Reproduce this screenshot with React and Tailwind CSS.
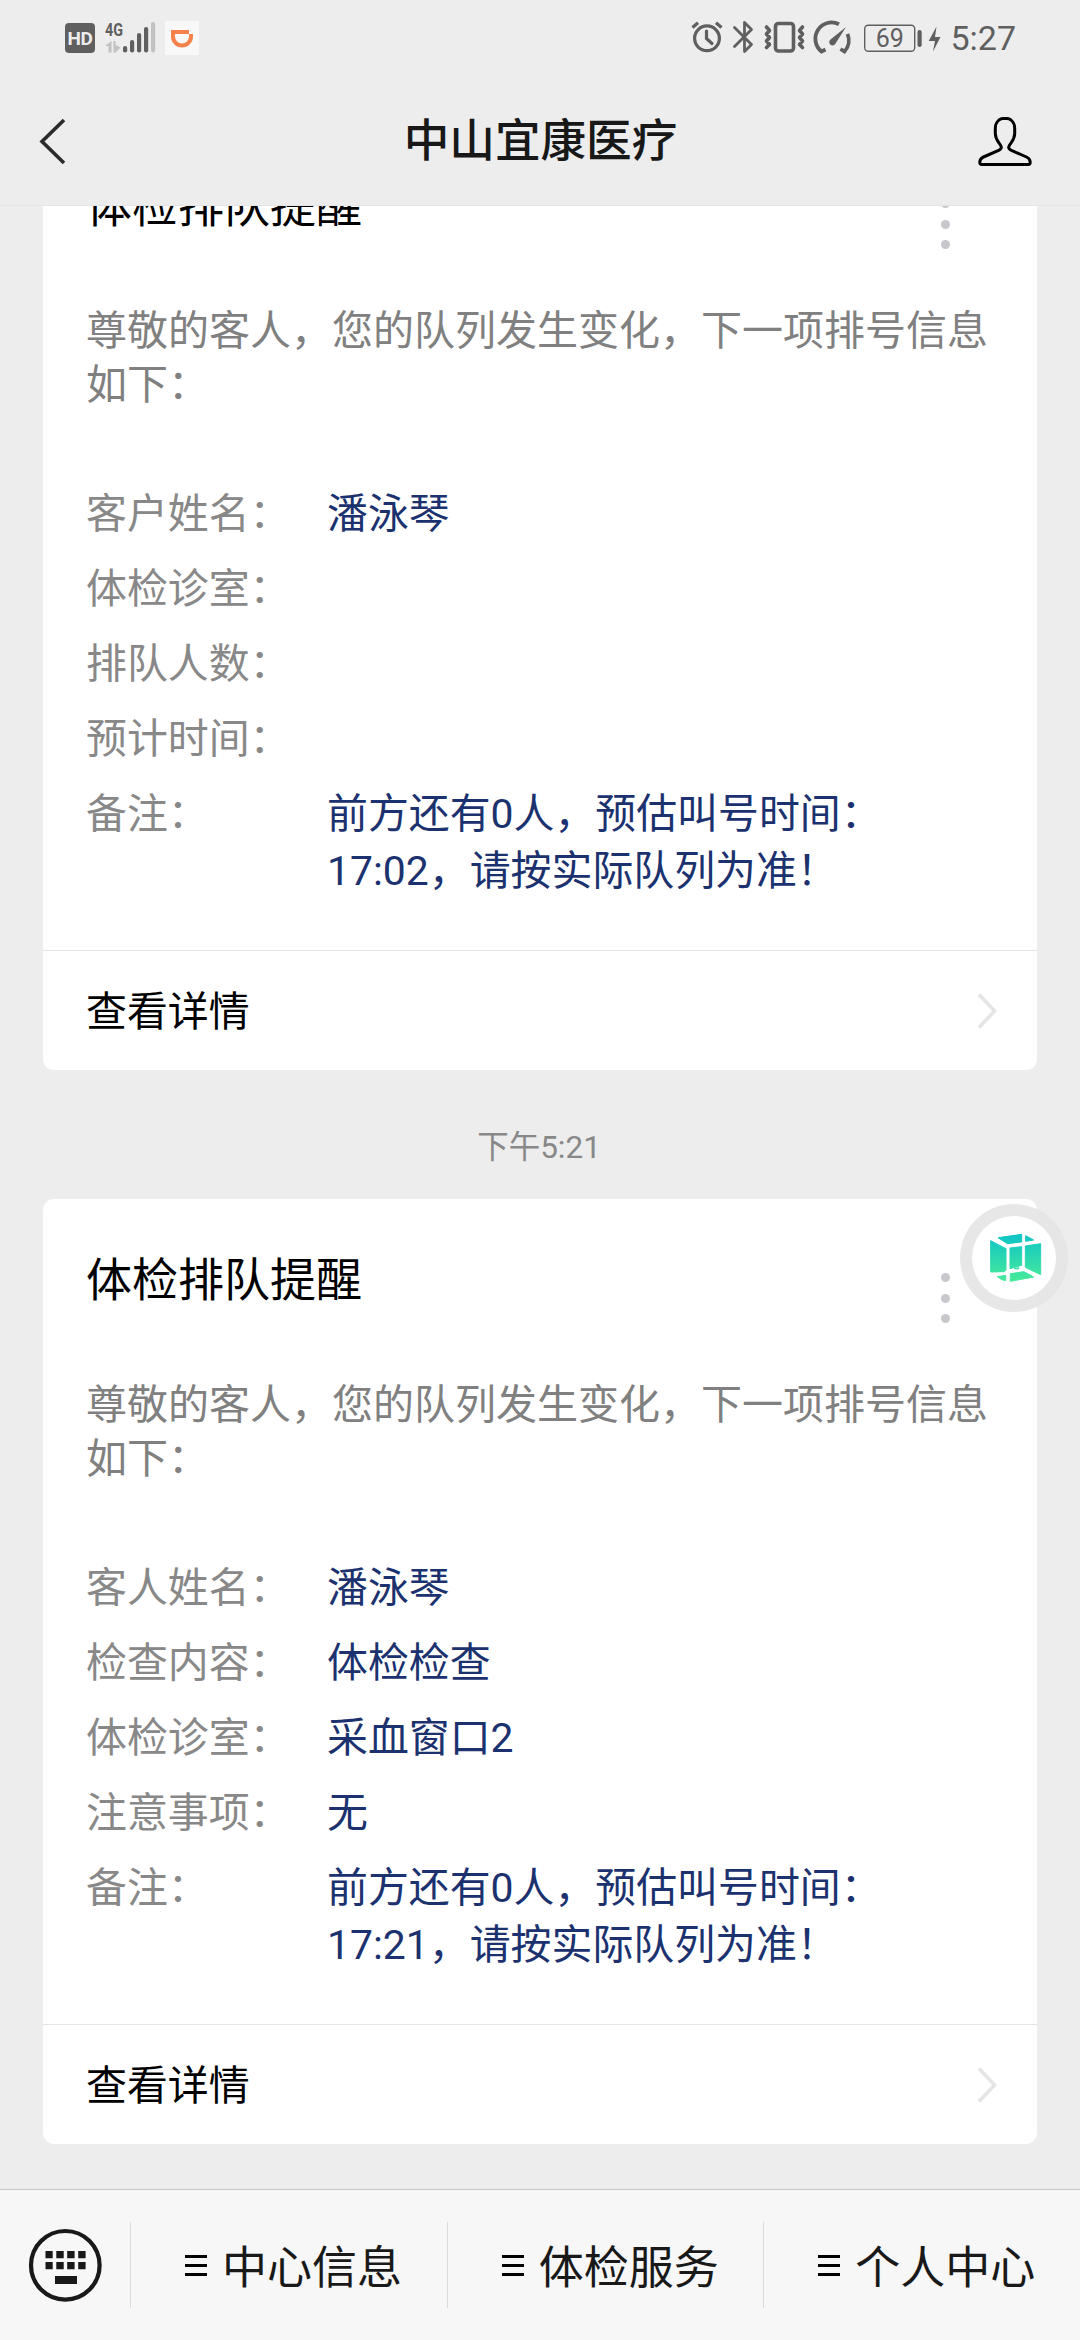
const CARDS = [
  {
    rows: [
      ["客户姓名：", ["潘泳琴"]],
      ["体检诊室：", []],
      ["排队人数：", []],
      ["预计时间：", []],
      ["备注：", ["前方还有0人，预估叫号时间：", "17:02，请按实际队列为准！"]],
    ],
  },
  {
    rows: [
      ["客人姓名：", ["潘泳琴"]],
      ["检查内容：", ["体检检查"]],
      ["体检诊室：", ["采血窗口2"]],
      ["注意事项：", ["无"]],
      ["备注：", ["前方还有0人，预估叫号时间：", "17:21，请按实际队列为准！"]],
    ],
  },
];

const MENUS = ["中心信息", "体检服务", "个人中心"];

function SignalIcons() {
  return (
    <div className="flex items-start">
      <div className="mt-[23px] flex h-[30px] w-[30px] items-center justify-center rounded-[4px] bg-[#5f5f5f] text-[19px] leading-none font-bold tracking-[-0.5px] text-[#ededed]">
        HD
      </div>
      <svg className="ml-[10px] mt-[18px]" width="52" height="36" viewBox="0 0 52 36">
        <text x="0" y="17.5" fontSize="19" fontWeight="700" fill="#5f5f5f" textLength="18" lengthAdjust="spacingAndGlyphs" fontFamily="Roboto, sans-serif">4G</text>
        <g fill="#c2c2c2">
          <path d="M6.500 23v11.500H3.500V28H0z M8.500 23h2v4l5 2.500-5 5h-2z" />
        </g>
        <g fill="#5f5f5f">
          <rect x="18" y="28" width="4.200" height="6.500" rx="2" />
          <rect x="25" y="22" width="4.200" height="12.500" rx="2" />
          <rect x="32" y="15" width="4.200" height="19.500" rx="2" />
          <rect x="39" y="9" width="4.200" height="25.500" rx="2" />
        </g>
        <rect x="46" y="4" width="4.200" height="30.500" rx="2" fill="#c2c2c2" />
      </svg>
      <div className="ml-[8px] mt-[21px] h-[34px] w-[34px] bg-[#f8f8f8]">
        <svg width="34" height="34" viewBox="0 0 34 34">
          <path d="M24 11H8v4.500a9 9 0 0 0 18 0V13" fill="none" stroke="#f5824a" strokeWidth="4" />
        </svg>
      </div>
    </div>
  );
}

function SystemIcons() {
  return (
    <div className="flex items-start">
      <svg className="mt-[18px]" width="252" height="38" viewBox="690 18 252 38" fill="none" stroke="#5f5f5f">
        <g strokeWidth="3.200">
          <circle cx="708" cy="38.300" r="12.400" />
          <path d="M707.500 31v7.500l5.500 5" strokeLinecap="round" />
          <path d="M693.500 27.500l5.500-4.700M722.500 27.500l-5.500-4.700" />
        </g>
        <path d="M735.500 27.500l17 17-7 7V22.500l7 7-17 17" strokeWidth="2.800" strokeLinejoin="round" strokeLinecap="round" />
        <rect x="776.500" y="23.500" width="18" height="27.500" rx="3" strokeWidth="3.600" />
        <path d="M767.500 27l3 3.500-3 3.500 3 3.500-3 3.500 3 3.500-3 3M803.500 27l-3 3.500 3 3.500-3 3.500 3 3.500-3 3.500 3 3" strokeWidth="3.600" strokeLinejoin="round" strokeLinecap="round" />
        <path d="M840 24.200A16.300 16.300 0 0 0 822.500 51.500l4-2M848.500 34A16.300 16.300 0 0 1 845.500 51.500l-4-2.500" strokeWidth="3.800" />
        <path d="M847 27l-10.500 16.500a3.300 3.300 0 1 1-5-4z" fill="#5f5f5f" stroke="none" />
        <rect x="865.700" y="25.300" width="50" height="26" rx="3.500" strokeWidth="1.400" />
        <rect x="918.500" y="30" width="4.200" height="17" rx="2" fill="#5f5f5f" stroke="none" />
        <path d="M937.500 26.500l-7.800 14.500h6.300l-2 10.500 7.500-14.500h-5.500z" fill="#5f5f5f" stroke="none" />
        <text x="890.800" y="46.600" textAnchor="middle" fontSize="25" fill="#5f5f5f" stroke="none" fontFamily="Roboto, sans-serif">69</text>
      </svg>
      <span className="ml-[9px] mt-[18px] text-[34px] leading-[40px] text-[#5f5f5f]">5:27</span>
    </div>
  );
}

function Header() {
  return (
    <header className="relative z-10 h-[206px] shrink-0 border-b border-[#e4e4e4] bg-[#ededed]">
      <div className="flex h-[76px] items-start justify-between pl-[65px] pr-[64px]">
        <SignalIcons />
        <SystemIcons />
      </div>
      <div className="flex h-[129px] items-center justify-between pl-[38px] pr-[47px]">
        <svg width="56" height="50" viewBox="38 115 56 50">
          <path d="M64 119L42 140.500l22 21.500" fill="none" stroke="#2b2b2b" strokeWidth="3.600" />
        </svg>
        <h1 className="pt-[3px] pl-[10px] text-[45.600px] leading-[60px] font-medium text-[#181818]">中山宜康医疗</h1>
        <svg width="56" height="54" viewBox="977 113 56 54">
          <path
            d="M1005 117.300c-6 0-9.700 4.200-9.700 10.200v5c0 4 1.700 6.700 3.600 9.300 2.800 3.700 4.100 5.200-.9 7.900l-14.500 6.300c-2.700 1.200-3.700 2.700-3.700 5.200 0 1.600.6 2.300 2 2.300h46.400c1.400 0 2-.7 2-2.300 0-2.500-1-4-3.700-5.200l-14.500-6.300c-5-2.700-3.700-4.200-.9-7.900 1.900-2.600 3.600-5.300 3.600-9.300v-5c0-6-3.700-10.200-9.700-10.200z"
            fill="none"
            stroke="#000"
            strokeWidth="3"
          />
        </svg>
      </div>
    </header>
  );
}

function Card({ rows }) {
  return (
    <article className="h-[945px] shrink-0 rounded-[11px] bg-white">
      <div className="flex h-[179px] justify-between pl-[43px] pr-[87px]">
        <h2 className="pt-[51px] text-[46px] leading-[60px] text-black">体检排队提醒</h2>
        <div className="flex flex-col gap-[11.500px] pt-[74px]">
          <i className="h-[9px] w-[9px] rounded-full bg-[#c8c7cc]" />
          <i className="h-[9px] w-[9px] rounded-full bg-[#c8c7cc]" />
          <i className="h-[9px] w-[9px] rounded-full bg-[#c8c7cc]" />
        </div>
      </div>
      <p className="pl-[43px] text-[41px] leading-[54px] whitespace-nowrap text-[#808080]">
        尊敬的客人，您的队列发生变化，下一项排号信息
        <br />
        如下：
      </p>
      <dl className="mt-[74px] flex flex-col gap-[18px] pl-[43px] text-[40.900px] leading-[57px] whitespace-nowrap">
        {rows.map(([label, lines]) => (
          <div key={label} className="flex">
            <dt className="w-[241px] text-[#888888]">{label}</dt>
            <dd className="text-[#1b326f]">
              {lines.map((line) => (
                <div key={line}>{line}</div>
              ))}
            </dd>
          </div>
        ))}
      </dl>
      <div className="mt-[50px] flex h-[121px] items-center justify-between border-t border-[#e5e5e5] pl-[43px] pr-[39px]">
        <span className="pt-[3px] text-[40.900px] leading-[57px] text-black">查看详情</span>
        <svg width="22" height="40" viewBox="0 0 22 40">
          <path d="M3 3.500L18.500 20 3 36.500" fill="none" stroke="#e5e5e5" strokeWidth="3.600" />
        </svg>
      </div>
    </article>
  );
}

function FloatingBall() {
  return (
    <div className="absolute top-[1204px] left-[960px] z-20 flex h-[108px] w-[108px] items-center justify-center rounded-full bg-[#e4e4e4]/90">
      <div className="flex h-[84px] w-[84px] items-center justify-center rounded-full bg-white">
        <svg className="ml-[2px]" width="54" height="52" viewBox="174 156 162 156">
          <defs>
            <linearGradient id="cube" gradientUnits="userSpaceOnUse" x1="0" y1="160" x2="0" y2="306">
              <stop offset="0" stopColor="#0cc3c8" />
              <stop offset="1" stopColor="#48eb98" />
            </linearGradient>
          </defs>
          <g fill="url(#cube)" stroke="url(#cube)" strokeWidth="3" strokeLinejoin="round">
            <path d="M204 173L275 163V186L232 191z" />
            <path d="M287 167L311 180L287 184z" />
            <path d="M182 182L228 206V270L222 275L182 276z" />
            <path d="M240 204L275 200V256L240 266z" />
            <path d="M286 198L332 191V284L286 262z" />
            <path d="M202 290L227 286V302L216 299z" />
            <path d="M241 281L282 275L311 291L241 304z" />
            <path d="M252 266L267 263L265 267z" />
          </g>
        </svg>
      </div>
    </div>
  );
}

function BottomBar() {
  return (
    <nav className="flex h-[151px] shrink-0 items-start border-t border-[#c8c8c8] bg-[#f7f7f7]">
      <svg className="mt-[37px] ml-[27px] mr-[26px]" width="77" height="77" viewBox="27 2227 77 77">
        <circle cx="65.300" cy="2265.300" r="34.300" fill="none" stroke="#191919" strokeWidth="4.200" />
        <g fill="#191919">
          <path d="M45.500 2251h7.200v7.200h-7.200zM56.300 2251h7.400v7.200h-7.400zM67.200 2251h7.400v7.200h-7.400zM78.200 2251h7.400v7.200h-7.400z" />
          <path d="M45.500 2262h7.200v7.200h-7.200zM56.300 2262h7.400v7.200h-7.400zM67.200 2262h7.400v7.200h-7.400zM78.200 2262h7.400v7.200h-7.400z" />
          <path d="M55 2276h22v8H55z" />
        </g>
      </svg>
      {MENUS.map((name) => (
        <div key={name} className="mt-[32px] flex h-[86px] w-[316.700px] items-center border-l border-[#dcdcdc] pl-[54px]">
          <svg className="mt-[2px] mr-[15px]" width="22" height="22" viewBox="0 0 22 22">
            <path d="M0 0h22v3H0zM0 9h22v3H0zM0 18h22v3H0z" fill="#000" />
          </svg>
          <span className="pt-[7px] text-[45px] leading-[60px] whitespace-nowrap text-[#191919]">{name}</span>
        </div>
      ))}
    </nav>
  );
}

export default function App() {
  return (
    <div className="relative flex h-[2340px] w-[1080px] flex-col overflow-hidden bg-[#ededed] font-[Roboto,'Noto_Sans_CJK_SC',sans-serif]">
      <Header />
      <main className="flex h-[1983px] shrink-0 flex-col overflow-hidden px-[43px]">
        <div className="-mt-[81px] flex flex-col">
          <Card rows={CARDS[0].rows} />
          <time className="flex h-[129px] shrink-0 items-center justify-center pt-[27px] pr-[2px] text-[31.500px] leading-[40px] text-[#888888]">下午5:21</time>
          <Card rows={CARDS[1].rows} />
        </div>
      </main>
      <BottomBar />
      <FloatingBall />
    </div>
  );
}
